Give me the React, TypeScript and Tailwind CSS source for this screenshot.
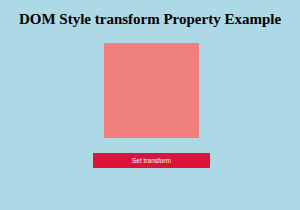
export default function App() {
    return (
        <div className="w-[300px] h-[210px] bg-[#add8e6] flex flex-col items-center overflow-hidden">
            <h1
                className="mt-[11px] text-[15px] leading-[17px] font-bold text-black text-center"
                style={{ fontFamily: '"Liberation Serif", serif' }}
            >
                DOM Style transform Property Example
            </h1>
            <div className="mt-[15px] ml-[3px] w-[95px] h-[95px] bg-[#f08080]" />
            <button
                className="mt-[15px] ml-[3px] w-[117px] h-[15px] bg-[#dc143c] text-white text-[6.5px] leading-[15px]"
                style={{ fontFamily: '"Liberation Sans", Arial, sans-serif' }}
            >
                Set transform
            </button>
        </div>
    );
}
